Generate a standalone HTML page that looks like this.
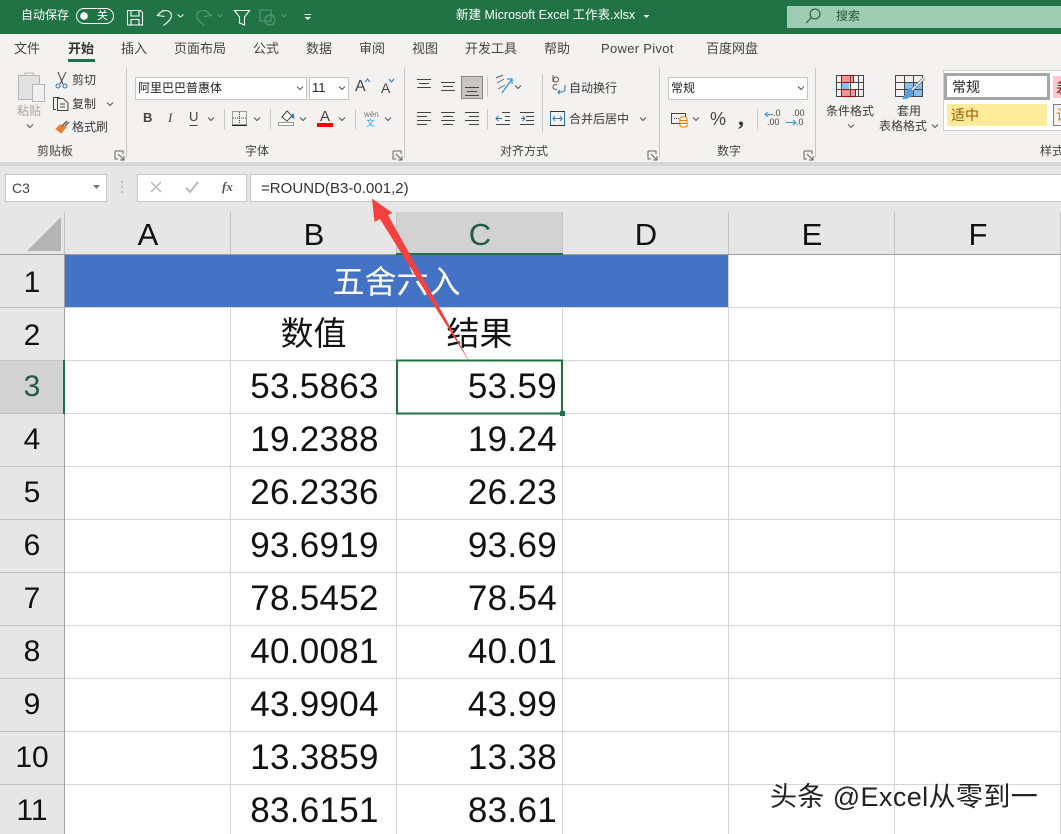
<!DOCTYPE html>
<html lang="zh-CN"><head><meta charset="utf-8"><title>Excel</title>
<style>
html,body{margin:0;padding:0;width:1061px;height:834px;overflow:hidden;background:#fff}
body{position:relative;font-family:"Liberation Sans","Noto Sans CJK SC",sans-serif}
.b{position:absolute}
.t{position:absolute;white-space:nowrap;font-size:12px;line-height:16px;color:#3b3a39;font-family:"Liberation Sans","Noto Sans CJK SC",sans-serif}
.tab{font-size:13px;line-height:18px;top:40px;color:#444}
.lab{top:143px;color:#444}
.hd{position:absolute;top:214px;height:42px;line-height:42px;width:166px;text-align:center;font-size:31px;color:#111}
.rn{position:absolute;left:0;width:64px;height:53px;line-height:53px;text-align:center;font-size:30px;color:#111}
.v{position:absolute;height:53px;line-height:53px;font-size:35px;letter-spacing:.3px;color:#111;white-space:nowrap}
.vb{left:232px;width:165px;text-align:center}
.vc{left:397px;width:160px;text-align:right}
</style></head><body>
<!-- title bar -->
<div class="b" style="left:0;top:0;width:1061px;height:34px;background:#217346"></div>
<div class="b" style="left:787px;top:6px;width:274px;height:22px;background:#9fcdb3"></div>
<!-- ribbon -->
<div class="b" style="left:0;top:34px;width:1061px;height:128px;background:#f3f2f1"></div>
<div class="b" style="left:0;top:162px;width:1061px;height:4px;background:#d6d6d6"></div>
<div class="b" style="left:0;top:166px;width:1061px;height:89px;background:#e6e6e6"></div>

<div class="t" style="left:21px;top:7px;color:#fff">自动保存</div>
<div class="t" style="left:97px;top:8px;color:#fff;font-size:11px">关</div>
<div class="t" style="left:456px;top:7px;color:#fff;font-size:12.500px">新建 Microsoft Excel 工作表.xlsx</div>
<div class="t" style="left:836px;top:8px;color:#1e5c3a">搜索</div>

<div class="t tab" style="left:14px">文件</div>
<div class="t tab" style="left:68px;font-weight:bold;color:#333">开始</div>
<div class="b" style="left:68px;top:59px;width:27px;height:3px;background:#217346"></div>
<div class="t tab" style="left:121px">插入</div>
<div class="t tab" style="left:174px">页面布局</div>
<div class="t tab" style="left:253px">公式</div>
<div class="t tab" style="left:306px">数据</div>
<div class="t tab" style="left:359px">审阅</div>
<div class="t tab" style="left:412px">视图</div>
<div class="t tab" style="left:465px">开发工具</div>
<div class="t tab" style="left:544px">帮助</div>
<div class="t tab" style="left:601px;letter-spacing:.3px">Power Pivot</div>
<div class="t tab" style="left:706px">百度网盘</div>

<!-- boxes -->
<div class="b" style="left:135px;top:77px;width:170px;height:21px;background:#fff;border:1px solid #c8c6c4"></div>
<div class="b" style="left:309px;top:77px;width:38px;height:21px;background:#fff;border:1px solid #c8c6c4"></div>
<div class="b" style="left:668px;top:77px;width:138px;height:21px;background:#fff;border:1px solid #c8c6c4"></div>
<div class="b" style="left:461px;top:76px;width:20px;height:21px;background:#c8c6c4;border:1px solid #8a8886"></div>
<div class="b" style="left:943px;top:70px;width:118px;height:61px;background:#fff;border-top:1px solid #d0d0d0;border-left:1px solid #d0d0d0;border-bottom:1px solid #d0d0d0;box-sizing:border-box"></div>
<div class="b" style="left:944px;top:73px;width:106px;height:27px;background:#fff;border:3px solid #a6a6a6;box-sizing:border-box"></div>
<div class="b" style="left:947px;top:104px;width:100px;height:22px;background:#ffeb9c"></div>
<div class="b" style="left:1053px;top:76px;width:8px;height:22px;background:#ffc7ce"></div>
<div class="b" style="left:1053px;top:104px;width:8px;height:22px;background:#f2f2f2;border:1px solid #7f7f7f;border-right:0;box-sizing:border-box"></div>

<div class="t" style="left:17px;top:103px;color:#a6a6a6">粘贴</div>
<div class="t" style="left:72px;top:72px">剪切</div>
<div class="t" style="left:72px;top:96px">复制</div>
<div class="t" style="left:72px;top:119px">格式刷</div>
<div class="t" style="left:138px;top:80px;color:#222">阿里巴巴普惠体</div>
<div class="t" style="left:312px;top:80px;color:#222;font-size:13px">11</div>
<div class="t" style="left:143px;top:110px;font-weight:bold;font-size:13px;color:#444">B</div>
<div class="t" style="left:168px;top:110px;font-style:italic;font-size:13px;font-family:'Liberation Serif',serif;color:#444">I</div>
<div class="t" style="left:189px;top:109px;font-size:13px;color:#444">U</div>
<div class="t" style="left:355px;top:77px;font-size:16px;line-height:20px;color:#444">A</div>
<div class="t" style="left:381px;top:78px;font-size:14px;line-height:20px;color:#444">A</div>
<div class="t" style="left:320px;top:109px;font-size:15px;color:#444">A</div>
<div class="t" style="left:364px;top:110px;font-size:8px;line-height:9px;color:#777">wén</div>
<div class="t" style="left:366px;top:118px;font-size:9px;line-height:10px;color:#2e9bd8">文</div>
<div class="t" style="left:569px;top:80px">自动换行</div>
<div class="t" style="left:569px;top:111px">合并后居中</div>
<div class="t" style="left:671px;top:80px;color:#222">常规</div>
<div class="t" style="left:710px;top:109px;font-size:18px;line-height:20px;color:#444">%</div>
<div class="t" style="left:738px;top:104px;font-size:24px;line-height:28px;font-weight:bold;font-family:'Liberation Serif',serif;color:#333">,</div>
<div class="t" style="left:773px;top:108px;font-size:9px;line-height:10px;color:#444">.0</div>
<div class="t" style="left:767px;top:117px;font-size:9px;line-height:10px;color:#444">.00</div>
<div class="t" style="left:792px;top:108px;font-size:9px;line-height:10px;color:#444">.00</div>
<div class="t" style="left:796px;top:117px;font-size:9px;line-height:10px;color:#444">.0</div>
<div class="t" style="left:826px;top:103px">条件格式</div>
<div class="t" style="left:897px;top:103px">套用</div>
<div class="t" style="left:879px;top:118px">表格格式</div>
<div class="t" style="left:952px;top:79px;font-size:14px;color:#222">常规</div>
<div class="t" style="left:951px;top:107px;font-size:14px;color:#9c5700">适中</div>
<div class="t" style="left:1056px;top:80px;font-size:14px;color:#9c0006">差</div>
<div class="t" style="left:1056px;top:107px;font-size:14px;color:#e07b00">计</div>
<div class="t lab" style="left:37px">剪贴板</div>
<div class="t lab" style="left:245px">字体</div>
<div class="t lab" style="left:500px">对齐方式</div>
<div class="t lab" style="left:717px">数字</div>
<div class="t lab" style="left:1040px">样式</div>

<!-- formula bar -->
<div class="b" style="left:5px;top:174px;width:100px;height:26px;background:#fff;border:1px solid #c8c8c8"></div>
<div class="b" style="left:137px;top:174px;width:108px;height:26px;background:#fff;border:1px solid #c8c8c8"></div>
<div class="b" style="left:250px;top:174px;width:811px;height:26px;background:#fff;border:1px solid #c8c8c8;border-right:0"></div>
<div class="t" style="left:12px;top:180px;font-size:14px;color:#444">C3</div>
<div class="t" style="left:222px;top:179px;font-size:13px;font-style:italic;font-family:'Liberation Serif',serif;color:#555;font-weight:bold">fx</div>
<div class="t" style="left:261px;top:181px;font-size:15px;letter-spacing:.03px;color:#333">=ROUND(B3-0.001,2)</div>

<!-- sheet -->
<div class="b" style="left:0;top:212px;width:64px;height:622px;background:#e6e6e6"></div>
<div class="b" style="left:396px;top:212px;width:166px;height:42px;background:#d2d2d2"></div>
<div class="b" style="left:0;top:361px;width:64px;height:52px;background:#d2d2d2"></div>
<div class="b" style="left:65px;top:255px;width:664px;height:52px;background:#4472c4"></div>

<svg class="b" style="left:0;top:0" width="1061" height="834" fill="none">
<defs>
<path id="c" d="M-3-1.500L0 1.500L3-1.500" stroke="#555" stroke-width="1"/>
<path id="dl" d="M0 0H8V3M0 0V8H3M3 3L9 9M5 9H9V5" stroke="#666" stroke-width="1"/>
</defs>
<!-- grid -->
<g stroke="#d4d4d4" stroke-width="1" shape-rendering="crispEdges">
<path d="M230.500 307V834M396.500 307V834M562.500 307V834M728.500 255V834M894.500 255V834M1060.500 255V834"/>
<path d="M65 307.500H1061M65 360.500H1061M65 413.500H1061M65 466.500H1061M65 519.500H1061M65 572.500H1061M65 625.500H1061M65 678.500H1061M65 731.500H1061M65 784.500H1061"/>
</g>
<g stroke="#c4c4c4" shape-rendering="crispEdges">
<path d="M64.500 212V254M230.500 212V254M396.500 212V254M562.500 212V254M728.500 212V254M894.500 212V254M1060.500 212V254"/>
<path d="M0 307.500H64M0 360.500H64M0 413.500H64M0 466.500H64M0 519.500H64M0 572.500H64M0 625.500H64M0 678.500H64M0 731.500H64M0 784.500H64"/>
</g>
<path d="M0 254.500H396M563 254.500H1061" stroke="#a0a0a0" shape-rendering="crispEdges"/>
<path d="M64.500 254V360M64.500 414V834" stroke="#a0a0a0" shape-rendering="crispEdges"/>
<path d="M27 251H61V217Z" fill="#b4b4b4"/>
<rect x="396" y="253" width="167" height="2" fill="#217346"/>
<rect x="63" y="360" width="2" height="54" fill="#217346"/>
<rect x="397" y="360.500" width="165" height="53" stroke="#217346" stroke-width="2" shape-rendering="crispEdges"/>
<rect x="560" y="411" width="5" height="5" fill="#217346"/>

<!-- title bar icons -->
<rect x="76.500" y="8.500" width="37" height="15" rx="7.500" stroke="#fff"/>
<circle cx="84" cy="16" r="3.800" fill="#fff"/>
<g stroke="#fff" stroke-width="1.100">
<path d="M127.500 10.500H140.500L142.500 12.500V25H127.500Z"/><path d="M131 10.500V16H139V10.500M131 25V19.500H139V25"/>
<path d="M163.500 10L157.500 15.500L164.500 16.500M157.500 15.500C162 9 171 9 171.500 15.500C171.500 19 168 22 163.500 25.500"/>
<path d="M234.500 10.500H249.500L244.500 17V25L239.500 23V17Z"/>
<path d="M304.500 14.500H311" stroke-width="1"/><path d="M304.500 17H311L307.800 20Z" fill="#fff" stroke="none"/>
</g>
<path d="M177.500 14.500L180.500 17L183.500 14.500" stroke="#fff"/>
<path d="M643.500 15H649.500L646.500 18Z" fill="#fff"/>
<g stroke="#5c9a78" stroke-width="1.100">
<path d="M205 10L211 15.500L204 16.500M211 15.500C206.500 9 197.500 9 196.500 15.500C196.500 19 200 22 204.500 25.500"/>
<path d="M217.500 14.500L220 17L222.500 14.500M281.500 14.500L284 17L286.500 14.500"/>
<rect x="260" y="10" width="11" height="11"/><circle cx="270" cy="20" r="5"/>
</g>
<circle cx="815" cy="14" r="5" stroke="#1e5c3a" stroke-width="1.100"/><path d="M811 18L806 23" stroke="#1e5c3a" stroke-width="1.100"/>

<!-- separators -->
<g stroke="#c8c6c4" shape-rendering="crispEdges">
<path d="M126.500 68V158M404.500 68V158M659.500 68V158M815.500 68V158"/>
<path d="M224.500 109V129M270.500 109V129M355.500 109V129M487.500 77V97M487.500 109V129M542.500 74V132M757.500 109V129"/>
</g>
<!-- launchers -->
<use href="#dl" x="115" y="151"/><use href="#dl" x="393" y="151"/><use href="#dl" x="648" y="151"/><use href="#dl" x="804" y="151"/>
<!-- chevrons -->
<use href="#c" x="30" y="126"/><use href="#c" x="110" y="104"/><use href="#c" x="300" y="88"/><use href="#c" x="342" y="88"/>
<use href="#c" x="211" y="119"/><use href="#c" x="257" y="119"/><use href="#c" x="303" y="119"/><use href="#c" x="342" y="119"/><use href="#c" x="388" y="119"/>
<use href="#c" x="518" y="87"/><use href="#c" x="643" y="119"/><use href="#c" x="801" y="88"/><use href="#c" x="696" y="119"/><use href="#c" x="851" y="126"/><use href="#c" x="935" y="126"/>
<!-- paste -->
<g stroke="#b5b5b5">
<rect x="18.500" y="75.500" width="21" height="24" fill="#e2e2e2"/><path d="M25 75.500V73H33V75.500"/><rect x="32.500" y="84.500" width="12" height="17" fill="#f0f0f0"/>
</g>
<!-- scissors -->
<path d="M58 72L63 84M66 72L60 84" stroke="#444"/><circle cx="58" cy="86" r="2" stroke="#2e75b6"/><circle cx="65" cy="86" r="2" stroke="#2e75b6"/>
<!-- copy -->
<path d="M56 109.500H53.500V97.500H59.500M57.500 98.500H63L68 103V110.500H57.500ZM60 104H65M60 107H65" stroke="#444"/>
<!-- brush -->
<path d="M60 125L56 129L61 133L66 127Z" fill="#ed7d31" stroke="#ed7d31"/><path d="M62 126L67 121M65 126L69 122" stroke="#555" stroke-width="1.300"/>
<!-- font icons -->
<path d="M365 82L367.500 79L370 82" stroke="#2e75b6"/><path d="M389 79L391.500 82L394 79" stroke="#2e75b6"/>
<path d="M189.500 125.500H197.500" stroke="#444"/>
<rect x="232.500" y="111.500" width="14" height="13" stroke="#444" stroke-dasharray="1 1"/><path d="M239.500 112V124M233 118H246" stroke="#444" stroke-dasharray="1 1"/><path d="M232 125.500H247" stroke="#222" stroke-width="1"/>
<path d="M282 117L287 111L292 116L287 121Z" stroke="#444" fill="#fff"/><path d="M291 117L293 114L294 118Z" fill="#2e75b6" stroke="#2e75b6"/><rect x="278.500" y="122.500" width="15" height="3" stroke="#999" fill="#fff"/>
<rect x="317" y="123" width="16" height="4" fill="#ff0000"/>
<!-- alignment -->
<g stroke="#444" shape-rendering="crispEdges">
<path d="M417 79.500H431M419 83.500H429M417 87.500H431"/>
<path d="M441 82.500H455M443 86.500H453M441 90.500H455"/>
<path d="M465 87.500H479M467 91.500H477M465 95.500H479"/>
<path d="M417 112.500H431M417 116.500H427M417 120.500H431M417 124.500H427"/>
<path d="M441 112.500H455M443 116.500H453M441 120.500H455M443 124.500H453"/>
<path d="M465 112.500H479M469 116.500H479M465 120.500H479M469 124.500H479"/>
<path d="M502 112.500H510M505 116.500H510M505 120.500H510M496 124.500H510"/>
<path d="M520 112.500H534M526 116.500H534M526 120.500H534M520 124.500H534"/>
</g>
<path d="M502 118.500H496M498.500 116L496 118.500L498.500 121M521 118.500H525M522.500 116L525 118.500L522.500 121" stroke="#2e75b6"/>
<path d="M496 78L503 75M497 83L504 79M498 89L505 85" stroke="#666"/><path d="M502 93L512 79M507 79H512V84" stroke="#2e9bd8" stroke-width="1.300"/>
<path d="M553 73V80M554 79A2.500 2.500 0 1 0 558 76A2.500 2.500 0 0 0 554 79M557 87A2.500 2.500 0 1 1 557 83" stroke="#555" transform="translate(0,2)"/>
<path d="M565 85V89Q565 92 561 92H558M560 90L558 92L560 94" stroke="#2e75b6"/>
<rect x="550.500" y="111.500" width="14" height="14" stroke="#2e75b6"/><path d="M550 111.500H565M550 125.500H565" stroke="#333"/><path d="M553 118.500H562M555 116L553 118.500L555 121M560 116L562 118.500L560 121" stroke="#2e75b6"/>
<!-- number -->
<rect x="671.500" y="113.500" width="14" height="10" stroke="#444"/><path d="M674 118.500H683" stroke="#444" stroke-dasharray="1 1"/>
<rect x="680" y="117" width="7" height="10" rx="2" fill="#fff" stroke="#e07b00"/><path d="M680 120.500H687M680 123.500H687" stroke="#e07b00"/>
<path d="M765 114.500H773M768 112L765 114.500L768 117M786 122.500H796M793 120L796 122.500L793 125" stroke="#2e9bd8" stroke-width="1.100"/>
<!-- conditional format -->
<g transform="translate(836,75)">
<rect x="5" y="0.500" width="12" height="6.500" fill="#ff9196"/><rect x="5" y="7" width="8" height="7" fill="#83bff0"/><rect x="5" y="14" width="14" height="7" fill="#ff9196"/><rect x="13" y="7" width="10" height="7" fill="#fff"/>
<path d="M.5 .5H27.500V21.500H.5ZM.5 7.500H27.500M.5 14.500H27.500M5.500 .5V21.500M14.500 .5V21.500M22.500 .5V21.500" stroke="#444" shape-rendering="crispEdges"/>
<path d="M5.500 .5H17.500V7.500H5.500ZM5.500 14.500H19.500V21.500H5.500Z" stroke="#c00000" shape-rendering="crispEdges"/>
</g>
<!-- table format -->
<g transform="translate(895,75)">
<rect x="9.500" y="7" width="18" height="14" fill="#83bff0"/>
<path d="M.5 .5H27.500V21.500H.5ZM.5 7.500H27.500M.5 14.500H27.500M9.500 .5V21.500M18.500 .5V21.500" stroke="#444" shape-rendering="crispEdges"/>
<path d="M29 3L16 16" stroke="#777" stroke-width="3"/><path d="M29 3L16 16" stroke="#fff" stroke-width="1.400"/>
<path d="M16 14C11 15 11 20 7 25C13 26 19 22 18 17Z" fill="#5b9bd5" transform="translate(0,-1)"/>
</g>
<!-- formula controls -->
<path d="M93 185H100L96.500 189Z" fill="#777"/>
<path d="M122 181v2M122 186v2M122 191v2" stroke="#999"/>
<path d="M151 182L161 192M161 182L151 192" stroke="#b8b8b8" stroke-width="1.500"/>
<path d="M186 188L190 192L198 182" stroke="#b8b8b8" stroke-width="2"/>
</svg>

<!-- headers -->
<div class="hd" style="left:65px">A</div>
<div class="hd" style="left:231px">B</div>
<div class="hd" style="left:397px;color:#215c40">C</div>
<div class="hd" style="left:563px">D</div>
<div class="hd" style="left:729px">E</div>
<div class="hd" style="left:895px">F</div>
<div class="rn" style="top:256px">1</div>
<div class="rn" style="top:309px">2</div>
<div class="rn" style="top:360px;color:#215c40">3</div>
<div class="rn" style="top:413px">4</div>
<div class="rn" style="top:466px">5</div>
<div class="rn" style="top:519px">6</div>
<div class="rn" style="top:572px">7</div>
<div class="rn" style="top:625px">8</div>
<div class="rn" style="top:678px">9</div>
<div class="rn" style="top:731px">10</div>
<div class="rn" style="top:784px">11</div>

<div class="t" style="left:65px;top:256px;width:663px;height:52px;line-height:52px;text-align:center;font-size:32px;color:#fff">五舍六入</div>
<div class="t" style="left:231px;top:307px;width:165px;height:53px;line-height:53px;text-align:center;font-size:33px;color:#111">数值</div>
<div class="t" style="left:397px;top:307px;width:165px;height:53px;line-height:53px;text-align:center;font-size:33px;color:#111">结果</div>

<div class="v vb" style="top:360px">53.5863</div><div class="v vc" style="top:360px">53.59</div>
<div class="v vb" style="top:413px">19.2388</div><div class="v vc" style="top:413px">19.24</div>
<div class="v vb" style="top:466px">26.2336</div><div class="v vc" style="top:466px">26.23</div>
<div class="v vb" style="top:519px">93.6919</div><div class="v vc" style="top:519px">93.69</div>
<div class="v vb" style="top:572px">78.5452</div><div class="v vc" style="top:572px">78.54</div>
<div class="v vb" style="top:625px">40.0081</div><div class="v vc" style="top:625px">40.01</div>
<div class="v vb" style="top:678px">43.9904</div><div class="v vc" style="top:678px">43.99</div>
<div class="v vb" style="top:731px">13.3859</div><div class="v vc" style="top:731px">13.38</div>
<div class="v vb" style="top:784px">83.6151</div><div class="v vc" style="top:784px">83.61</div>

<!-- arrow -->
<svg class="b" style="left:0;top:0" width="1061" height="834"><path d="M372 198.500L392.500 213L388 215L471 364.500L380 219L374.500 222Z" fill="#f4403f"/></svg>

<!-- watermark -->
<div class="t" style="left:770px;top:779px;font-size:27px;line-height:36px;letter-spacing:.4px;color:#222;text-shadow:1px 1px 1px #fff,-1px -1px 1px #fff">头条 @Excel从零到一</div>
</body></html>
